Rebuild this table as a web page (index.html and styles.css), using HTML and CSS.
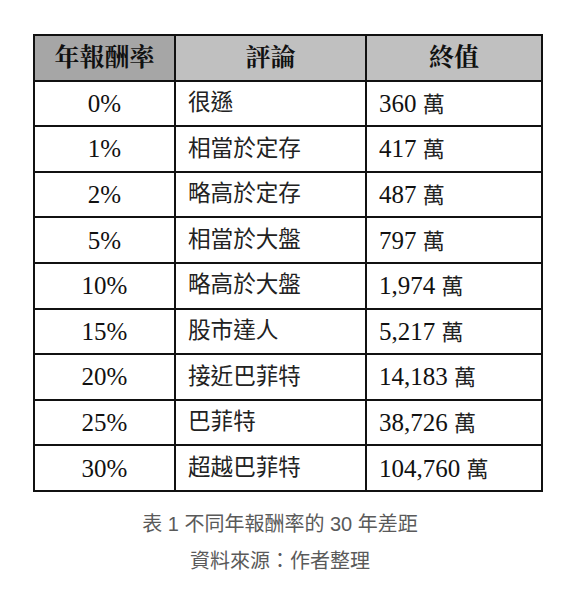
FILE: index.html
```html
<!DOCTYPE html>
<html lang="zh-Hant">
<head>
<meta charset="utf-8">
<link rel="stylesheet" href="styles.css">
</head>
<body>
<div class="page">
  <table class="returns">
    <thead>
      <tr>
        <th class="c1 dark">年報酬率</th>
        <th class="c2">評論</th>
        <th class="c3">終值</th>
      </tr>
    </thead>
    <tbody>
      <tr><td class="c1">0%</td><td class="c2">很遜</td><td class="c3">360 <span class="unit">萬</span></td></tr>
      <tr><td class="c1">1%</td><td class="c2">相當於定存</td><td class="c3">417 <span class="unit">萬</span></td></tr>
      <tr><td class="c1">2%</td><td class="c2">略高於定存</td><td class="c3">487 <span class="unit">萬</span></td></tr>
      <tr><td class="c1">5%</td><td class="c2">相當於大盤</td><td class="c3">797 <span class="unit">萬</span></td></tr>
      <tr><td class="c1">10%</td><td class="c2">略高於大盤</td><td class="c3">1,974 <span class="unit">萬</span></td></tr>
      <tr><td class="c1">15%</td><td class="c2">股市達人</td><td class="c3">5,217 <span class="unit">萬</span></td></tr>
      <tr><td class="c1">20%</td><td class="c2">接近巴菲特</td><td class="c3">14,183 <span class="unit">萬</span></td></tr>
      <tr><td class="c1">25%</td><td class="c2">巴菲特</td><td class="c3">38,726 <span class="unit">萬</span></td></tr>
      <tr><td class="c1">30%</td><td class="c2">超越巴菲特</td><td class="c3">104,760 <span class="unit">萬</span></td></tr>
    </tbody>
  </table>
  <div class="caption">
    <p>表 1 不同年報酬率的 30 年差距</p>
    <p>資料來源：作者整理</p>
  </div>
</div>
</body>
</html>
```
FILE: styles.css
```css
html, body {
  margin: 0;
  padding: 0;
  background: #ffffff;
}
.page {
  padding: 34px 28px 0 33px;
}
.returns {
  border-collapse: collapse;
  width: 508px;
  table-layout: fixed;
  font-family: "Liberation Serif", "Noto Sans CJK TC", serif;
  font-size: 25px;
  color: #111;
  border: 2px solid #111;
}
.returns th,
.returns td {
  border: 2px solid #111;
  height: 45.6px;
  padding: 0 0 0 12px;
  box-sizing: border-box;
  text-align: left;
  vertical-align: middle;
  line-height: 1;
}
.returns td.c2 {
  font-size: 22.6px;
  color: #222;
}
.returns .unit {
  font-size: 22px;
  color: #222;
}
.returns th {
  font-family: "Liberation Serif", "Noto Serif CJK TC", "Noto Sans CJK TC", serif;
  background: #c0c0c0;
  text-align: center;
  font-weight: bold;
  font-size: 25px;
  padding: 0;
}
.returns th.dark {
  background: #a6a6a6;
}
.returns .c1 {
  width: 141px;
  text-align: center;
  padding: 0;
}
.returns .c2 {
  width: 191px;
}
.returns .c3 {
  width: 176px;
}
.caption {
  margin-top: 14px;
  width: 494px;
  text-align: center;
  font-family: "Liberation Sans", "Noto Sans CJK TC", sans-serif;
  font-size: 20px;
  color: #5a5a5a;
}
.caption p {
  margin: 0;
  line-height: 37px;
}
```
